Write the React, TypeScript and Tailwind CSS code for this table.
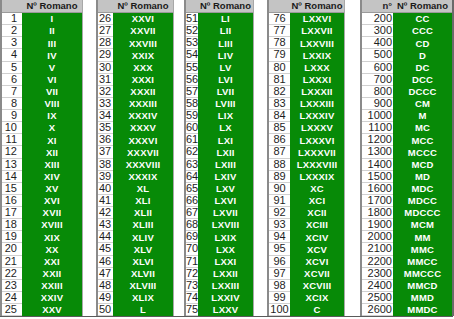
import React from "react";

function toRoman(n: number): string {
  const map: [number, string][] = [
    [1000, "M"], [900, "CM"], [500, "D"], [400, "CD"], [100, "C"], [90, "XC"],
    [50, "L"], [40, "XL"], [10, "X"], [9, "IX"], [5, "V"], [4, "IV"], [1, "I"],
  ];
  let s = "";
  for (const [v, r] of map) {
    while (n >= v) {
      s += r;
      n -= v;
    }
  }
  return s;
}

type GroupProps = {
  nums: number[];
  numCls: string;
  greenCls: string;
  wrapCls: string;
  headNum?: string;
};

function Group({ nums, numCls, greenCls, wrapCls, headNum }: GroupProps) {
  return (
    <div className={"flex flex-col " + wrapCls}>
      <div className="flex h-[13px] bg-[#c4c4c4] border-b border-[#9a9a9a]">
        <div className={"flex items-center justify-center h-full text-[9.5px] font-bold text-[#222] " + numCls}>
          {headNum}
        </div>
        <div className={"flex items-center justify-center h-full text-[9.5px] font-bold text-[#1a1a1a] " + greenCls}>
          Nº Romano
        </div>
      </div>
      {nums.map((n) => (
        <div key={n} className="flex h-[12.125px]">
          <div className={"flex items-center h-full bg-white border-b border-[#d0d0d0] text-[11px] leading-none text-[#1e1e1e] " + numCls}>
            {n}
          </div>
          <div className={"flex items-center justify-center h-full bg-[#078a07] text-[9.5px] leading-none font-bold text-white tracking-[0.2px] " + greenCls}>
            {toRoman(n)}
          </div>
        </div>
      ))}
    </div>
  );
}

const range = (a: number, b: number, step = 1) => {
  const r: number[] = [];
  for (let i = a; i <= b; i += step) r.push(i);
  return r;
};

export default function App() {
  return (
    <div className="w-[454px] h-[319px] bg-white overflow-hidden" style={{ fontFamily: '"Liberation Sans", Arial, sans-serif' }}>
      <div className="flex items-start">
        <Group
          nums={range(1, 25)}
          wrapCls="border-l-2 border-r border-l-[#8a8a8a] border-r-[#a8a8a8]"
          numCls="w-[20px] justify-end pr-[5px]"
          greenCls="w-[60px]"
        />
        <div className="w-[13px]" />
        <Group
          nums={range(26, 50)}
          wrapCls="border-l-2 border-r border-l-[#8a8a8a] border-r-[#a8a8a8]"
          numCls="w-[15px] justify-start pl-[1px]"
          greenCls="w-[60px]"
        />
        <div className="w-[10px]" />
        <Group
          nums={range(51, 75)}
          wrapCls="border-l-2 border-r border-l-[#8a8a8a] border-r-[#a8a8a8]"
          numCls="w-[12px] justify-start pl-[0px]"
          greenCls="w-[55px]"
        />
        <div className="w-[13px]" />
        <Group
          nums={range(76, 100)}
          wrapCls="border-l-2 border-r border-l-[#8a8a8a] border-r-[#a8a8a8]"
          numCls="w-[21px] justify-center"
          greenCls="w-[54px]"
        />
        <div className="w-[15px]" />
        <Group
          nums={range(200, 2600, 100)}
          wrapCls="border-l-2 border-r-2 border-l-[#8a8a8a] border-r-[#6a6a6a]"
          numCls="w-[31px] justify-end pr-[1px]"
          greenCls="w-[59px]"
          headNum="n°"
        />
      </div>
      <div className="h-[1px] w-[453px] bg-[#5a5a5a]" />
    </div>
  );
}
